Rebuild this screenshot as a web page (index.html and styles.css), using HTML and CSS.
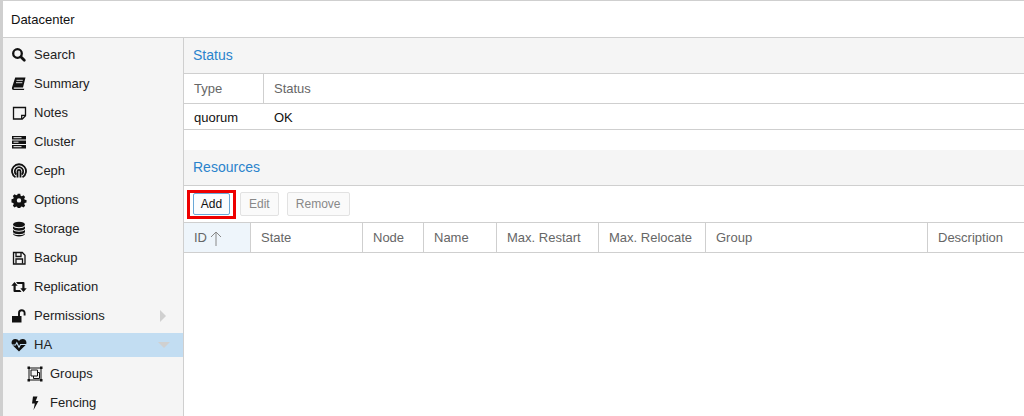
FILE: index.html
```html
<!DOCTYPE html>
<html lang="en">
<head>
<meta charset="utf-8">
<title>Datacenter</title>
<link rel="stylesheet" href="styles.css">
</head>
<body>
<div class="app">
  <header class="top">Datacenter</header>
  <div class="main">
    <nav class="side">
      <div class="item"><svg class="ic" viewBox="0 0 16 16"><circle cx="6.500" cy="6.500" r="4.300" fill="none" stroke="#111" stroke-width="2.300"/><path d="M10 10l3.300 3.300" stroke="#111" stroke-width="2.800" stroke-linecap="round"/></svg><span>Search</span></div>
      <div class="item"><svg class="ic" viewBox="0 0 16 16"><path fill="#111" d="M4.200 1.500h10.300l-2.500 10H3.300c-.8 0-.8 1.300 0 1.300h10l-.4 1.200H2.700C1.200 14 .700 13 1 11.500z"/><path d="M5.500 4.300h6.300M5 6.700h6.300" stroke="#f5f5f5" stroke-width=".9"/></svg><span>Summary</span></div>
      <div class="item"><svg class="ic" viewBox="0 0 16 16"><path d="M2.500 2.500h12v8.300l-3.200 3.200H2.500z" fill="none" stroke="#111" stroke-width="1.300"/><path d="M10.700 14v-3.700h3.800" fill="none" stroke="#111" stroke-width="1.300"/></svg><span>Notes</span></div>
      <div class="item"><svg class="ic" viewBox="0 0 16 16"><path d="M1 2h14v3.500H1zM1 6.500h14V10H1zM1 11h14v3.500H1z" fill="#111"/><path d="M2.500 3.700h8M2.500 8.200h5M2.500 12.700h8" stroke="#f5f5f5" stroke-width="1"/></svg><span>Cluster</span></div>
      <div class="item"><svg class="ic" viewBox="0 0 16 16"><g fill="none" stroke="#111" stroke-width="1.800"><path d="M4.500 14.300A7 7 0 1 1 11.500 14.300"/><path d="M5.300 11.600A4.200 4.200 0 1 1 10.700 11.600"/><path d="M6.500 14.500V8.300a1.500 1.500 0 0 1 3 0v6.200"/></g></svg><span>Ceph</span></div>
      <div class="item"><svg class="ic" viewBox="0 0 16 16"><path fill="#111" fill-rule="evenodd" d="M6.700 1.500h2.600l.4 1.900 1.300.6 1.700-1 1.800 1.800-1 1.700.5 1.200 1.900.4v2.600l-1.900.4-.5 1.200 1 1.700-1.800 1.800-1.700-1-1.300.5-.4 1.900H6.700l-.4-1.900-1.300-.5-1.700 1-1.800-1.800 1-1.700-.5-1.200-1.900-.4V7.100l1.900-.4.500-1.200-1-1.700 1.800-1.800 1.700 1 1.300-.6zM8 6.100a2.300 2.300 0 1 0 0 4.600 2.300 2.300 0 0 0 0-4.600z" transform="translate(.4 .4) scale(.95)"/></svg><span>Options</span></div>
      <div class="item"><svg class="ic" viewBox="0 0 16 16"><ellipse cx="8" cy="3.500" rx="6" ry="2.800" fill="#111"/><path d="M2 5.300c1 2.500 11 2.500 12 0v2.300c-1 3-11 3-12 0zM2 8.800c1 2.500 11 2.500 12 0v2.200c-1 3-11 3-12 0zM2 12.200c1 2.500 11 2.500 12 0v.8c-1 3.300-11 3.300-12 0z" fill="#111"/></svg><span>Storage</span></div>
      <div class="item"><svg class="ic" viewBox="0 0 16 16"><path d="M2.500 2.500h8.800l2.700 2.700v8.800H2.500z" fill="none" stroke="#111" stroke-width="1.300"/><path d="M5 3v3.500h5V3M5 13.500V9h6.500v4.500" fill="none" stroke="#111" stroke-width="1.300"/></svg><span>Backup</span></div>
      <div class="item"><svg class="ic" viewBox="0 0 16 16"><path d="M3.500 3L6.700 6.700H4.700V11H9L10.500 13H3.500A1 1 0 0 1 2.500 12V6.700H.3zM12.500 13L9.300 9.300H11.300V5H6.500L5 3H12.500A1 1 0 0 1 13.500 4V9.300H15.700z" fill="#111"/></svg><span>Replication</span></div>
      <div class="item"><svg class="ic" viewBox="0 0 16 16"><path d="M1 8h9.500v6.500H1z" fill="#111"/><path d="M8 8.500V5a2.800 2.800 0 0 1 5.600 0v2.500" fill="none" stroke="#111" stroke-width="1.900"/></svg><span>Permissions</span><i class="arrow right"></i></div>
      <div class="item sel"><svg class="ic" viewBox="0 0 16 16"><path d="M8 14.500L1.600 8.300C-.7 5.800 1 2 4.300 2c1.600 0 2.900.8 3.700 2 .8-1.200 2.100-2 3.700-2 3.300 0 5 3.800 2.700 6.300z" fill="#111"/><path d="M.500 8h4l1.300-2.300 2.200 4.500 1.500-2.700h6" fill="none" stroke="#c2ddf2" stroke-width="1.100"/></svg><span>HA</span><i class="arrow down"></i></div>
      <div class="item sub"><svg class="ic" viewBox="0 0 16 16"><g fill="none" stroke="#111" stroke-width="1"><path d="M2 2h12v12H2z"/><path d="M4 4h6.500v6H4zM6.500 10v2.500h6v-6h-2"/></g><path d="M.500.500h2.500v2.500h-2.500zM13 .500h2.500v2.500H13zM.500 13h2.500v2.500h-2.500zM13 13h2.500v2.500H13z" fill="#111"/></svg><span>Groups</span></div>
      <div class="item sub"><svg class="ic" viewBox="0 0 16 16"><path d="M6 1.500h4.500L8.700 6H11.500L6.500 15l1.300-6.500H5z" fill="#111"/></svg><span>Fencing</span></div>
    </nav>
    <main class="content">
      <section class="status">
        <h2 class="title">Status</h2>
        <div class="grid head status-cols"><div class="cell">Type</div><div class="cell">Status</div></div>
        <div class="grid row status-cols"><div class="cell">quorum</div><div class="cell">OK</div></div>
      </section>
      <section>
        <h2 class="title">Resources</h2>
        <div class="toolbar">
          <button class="btn add">Add</button>
          <button class="btn off edit">Edit</button>
          <button class="btn off remove">Remove</button>
        </div>
        <div class="grid head res-cols">
          <div class="cell sorted">ID<svg class="sort" viewBox="0 0 12 14"><path d="M6 15V1M1 6l5-5 5 5" fill="none" stroke="#888" stroke-width="1"/></svg></div>
          <div class="cell">State</div><div class="cell">Node</div><div class="cell">Name</div>
          <div class="cell">Max. Restart</div><div class="cell">Max. Relocate</div><div class="cell">Group</div><div class="cell">Description</div>
        </div>
      </section>
    </main>
  </div>
</div>
</body>
</html>
```
FILE: styles.css
```css
html, body { margin: 0; height: 100%; overflow: hidden; background: #fff; }
* { box-sizing: border-box; }
.app {
  height: 416px;
  display: flex;
  flex-direction: column;
  border-top: 1px solid #cfcfcf;
  border-left: 3px solid #cfcfcf;
  font: 13px/16px "Liberation Sans", Arial, sans-serif;
  color: #111;
}
.top {
  flex: none;
  height: 37px;
  padding: 11px 8px 0;
  border-bottom: 1px solid #cfcfcf;
}
.main { flex: 1; display: flex; min-height: 0; }
.side {
  flex: none;
  width: 181px;
  padding-top: 5px;
  background: #f5f5f5;
  border-right: 1px solid #cfcfcf;
  display: flex;
  flex-direction: column;
  gap: 5px;
}
.item {
  flex: none;
  height: 24px;
  display: flex;
  align-items: center;
  padding-left: 8px;
  gap: 7px;
  color: #222;
}
.item.sel { background: #c2ddf2; }
.item.sub { padding-left: 24px; }
.ic { width: 16px; height: 16px; flex: none; }
.arrow { margin-left: auto; width: 0; height: 0; border-style: solid; }
.arrow.right { margin-right: 17px; border-width: 6px 0 6px 6px; border-color: transparent transparent transparent #d0d0d0; }
.arrow.down { margin-right: 13px; border-width: 6px 6px 0 6px; border-color: #d0d0d0 transparent transparent transparent; }
.content { flex: 1; min-width: 0; }
.status { height: 112px; }
.title {
  margin: 0;
  height: 36px;
  padding: 9px 9px;
  background: #f5f5f5;
  border-bottom: 1px solid #cfcfcf;
  font: 14px/17px "Liberation Sans", Arial, sans-serif;
  color: #2a83cc;
}
.grid { display: grid; border-bottom: 1px solid #cfcfcf; }
.status-cols { grid-template-columns: 80px 1fr; }
.res-cols { grid-template-columns: 67px 112px 61px 73px 102px 107px 222px 1fr; }
.head { height: 30px; color: #666; }
.row { height: 26px; color: #111; }
.cell { padding: 7px 10px 0; white-space: nowrap; overflow: hidden; }
.head .cell { border-right: 1px solid #cfcfcf; }
.head .cell:last-child { border-right: 0; }
.row .cell { padding-top: 6px; }
.sorted { background: #eef5fb; display: flex; gap: 3px; }
.sort { width: 12px; height: 16px; }
.toolbar {
  height: 37px;
  padding: 6px 9px 0;
  display: flex;
  align-items: flex-start;
  border-bottom: 1px solid #cfcfcf;
}
.btn {
  height: 24px;
  padding: 0 8px;
  background: #fff;
  border: 1px solid #e2e2e2;
  border-radius: 2px;
  font: 12px "Liberation Sans", Arial, sans-serif;
  color: #111;
}
.btn.add {
  position: relative;
  margin: 1px 0 0;
  height: 22px;
  width: 37px;
  padding: 0;
  border-color: #6aa8d8;
  background: #fbfdff;
}
.btn.add::after {
  content: "";
  position: absolute;
  top: -4px;
  bottom: -5px;
  left: -7px;
  right: -7px;
  border: 3px solid #ee0000;
}
.btn.off { color: #888; background: #fafafa; }
.btn.edit { margin: 0 8px 0 10px; }
.btn.remove { width: 63px; padding: 0; }
```
